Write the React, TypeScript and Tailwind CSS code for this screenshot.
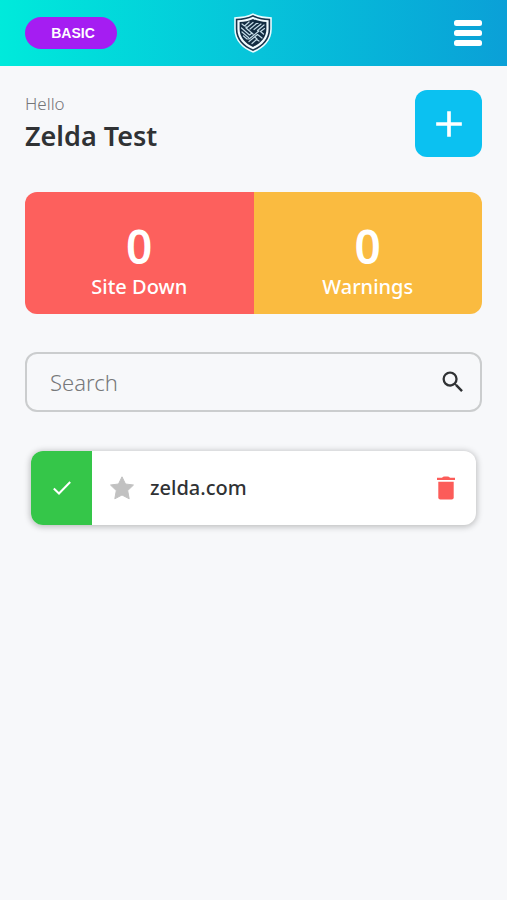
import { useState } from "react";
import { MdAdd, MdSearch } from "react-icons/md";

interface Site {
  id: number;
  name: string;
}

interface StatProps {
  value: number;
  label: string;
  className: string;
}

const initialSites: Site[] = [{ id: 1, name: "zelda.com" }];

function ShieldLogo() {
  return (
    <svg viewBox="0 0 38 40" className="h-10 w-[38px]" aria-hidden="true">
      <path
        d="M19 .3C24 3 31 4 37.800 4.200V16C37.800 28 29 35.700 19 39.800C9 35.700 .2 28 .2 16V4.200C7 4 14 3 19 .3Z"
        fill="#e9fbff"
      />
      <path
        d="M19 2C24 4.600 30 5.600 36.200 5.800V16C36.200 27 28.500 34 19 38C9.500 34 1.800 27 1.800 16V5.800C8 5.600 14 4.600 19 2Z"
        fill="#18334a"
      />
      <path
        d="M19 3.700C24 6 29 7 34.600 7.200V16C34.600 26 27.800 32.500 19 36.300C10.200 32.500 3.400 26 3.400 16V7.200C9 7 14 6 19 3.700Z"
        fill="#f1fbff"
      />
      <path
        d="M19 5.900C23 7.800 27.500 8.800 32.400 9V16C32.400 24.600 26.500 30.500 19 33.900C11.500 30.500 5.600 24.600 5.600 16V9C10.500 8.800 15 7.800 19 5.900Z"
        fill="#122c42"
      />
      {/* Maze lines */}
      <path
        d="M8 11L10.500 13L15 9M13 14.500L19 9.500M16 16L22.500 10.500H24M20 16.500L27 11M23.500 17.500L30 12M7.500 15L15.500 22L18 20M8 19L14.500 24.500M12 13.500V15L19 21M9.500 23L13 26H15L25 18M30.500 15.500L26.500 18.500L29.500 21M15 28.500L23.500 21.500L28 25M18 30.500L22.500 26.500L25 28M20.500 23.800L23 26"
        fill="none"
        stroke="#c4dce8"
        strokeWidth="1.200"
        strokeLinecap="round"
        strokeLinejoin="round"
      />
    </svg>
  );
}

function MenuIcon() {
  return (
    <svg viewBox="0 0 28 26" className="h-[26px] w-7" fill="#fff" aria-hidden="true">
      <rect width="28" height="6" rx="2.500" />
      <rect y="10" width="28" height="6" rx="2.500" />
      <rect y="20" width="28" height="6" rx="2.500" />
    </svg>
  );
}

function CheckIcon() {
  return (
    <svg viewBox="0 0 18 14" className="h-[14px] w-[18px]" fill="none" stroke="#fff" strokeWidth="2" aria-hidden="true">
      <path d="M.8 7.500L6 12.500L17.200 1" />
    </svg>
  );
}

function StarIcon() {
  return (
    <svg viewBox="0 0 24 24" className="size-6" fill="#c1c1c1" stroke="#c1c1c1" strokeLinejoin="round" aria-hidden="true">
      <path d="M12 .8L15.500 8L23.500 9L17.700 14.600L19.200 22.800L12 19L4.800 22.800L6.300 14.600L.5 9L8.500 8Z" />
    </svg>
  );
}

function TrashIcon() {
  return (
    <svg viewBox="0 0 20 24" className="h-6 w-5" fill="#fc5c59" aria-hidden="true">
      <path d="M1 1.800H6Q7 .5 8.500 .5H11.500Q13 .5 14 1.800H19V4H1Z" />
      <path d="M2.300 5.800H17.700V21.500Q17.700 23.500 15.700 23.500H4.300Q2.300 23.500 2.300 21.500Z" />
    </svg>
  );
}

function Stat({ value, label, className }: StatProps) {
  return (
    <div className={`flex flex-1 flex-col items-center pt-7 pb-3 text-white ${className}`}>
      <span className="text-[46px] leading-[52px] font-semibold">{value}</span>
      <span className="text-xl leading-[30px] font-medium">{label}</span>
    </div>
  );
}

export default function App() {
  const [sites, setSites] = useState<Site[]>(initialSites);
  const [query, setQuery] = useState("");

  const visibleSites = sites.filter((site) => site.name.includes(query.trim().toLowerCase()));

  const removeSite = (id: number) => {
    setSites(sites.filter((site) => site.id !== id));
  };

  return (
    <div className="min-h-screen bg-[#f7f8fa] font-['Noto_Sans',sans-serif] text-[#303234]">
      <header className="grid grid-cols-3 items-center bg-linear-to-r from-[#00eadb] via-[#07c4da] to-[#0ba0d7] px-[25px] py-[13px]">
        <div>
          <button
            type="button"
            className="h-8 w-[92px] rounded-full bg-[#a51df2] pl-1 font-['Liberation_Sans',sans-serif] text-sm font-bold text-white"
          >
            BASIC
          </button>
        </div>
        <div className="flex justify-center">
          <ShieldLogo />
        </div>
        <button type="button" aria-label="Menu" className="justify-self-end">
          <MenuIcon />
        </button>
      </header>

      <main className="px-[25px] pt-6">
        {/* Greeting */}
        <div className="flex items-center justify-between">
          <div>
            <p className="text-[17px] leading-6 font-light text-[#747678]">Hello</p>
            <h1 className="text-[27px] leading-10 font-semibold">Zelda Test</h1>
          </div>
          <button
            type="button"
            aria-label="Add site"
            className="flex size-[67px] items-center justify-center rounded-xl bg-[#0bc1f1] text-white"
          >
            <MdAdd className="size-11" />
          </button>
        </div>

        {/* Stats */}
        <div className="mt-[35px] flex overflow-hidden rounded-xl">
          <Stat value={0} label="Site Down" className="bg-[#fd605d]" />
          <Stat value={0} label="Warnings" className="bg-[#fabb40]" />
        </div>

        {/* Search */}
        <div className="mt-[38px] flex h-[60px] items-center rounded-xl border-2 border-[#cbcdce] pr-[13px] pl-[23px]">
          <input
            type="text"
            aria-label="Search"
            placeholder="Search"
            value={query}
            onChange={(e) => setQuery(e.target.value)}
            className="min-w-0 flex-1 bg-transparent text-[22px] leading-8 font-light outline-none placeholder:text-[#77797b]"
          />
          <MdSearch className="size-7" />
        </div>

        {/* Sites */}
        <ul className="mt-[39px] space-y-4 px-[6px]">
          {visibleSites.map((site) => (
            <li
              key={site.id}
              className="flex h-[74px] items-center overflow-hidden rounded-xl bg-white pr-5 shadow-[0_1px_6px_1px_rgba(0,0,0,0.24)]"
            >
              <div className="flex w-[61px] items-center justify-center self-stretch bg-[#35c649]">
                <CheckIcon />
              </div>
              <button type="button" aria-label="Favorite" className="ml-[18px]">
                <StarIcon />
              </button>
              <span className="ml-4 flex-1 text-xl font-medium">{site.name}</span>
              <button type="button" aria-label="Delete" onClick={() => removeSite(site.id)}>
                <TrashIcon />
              </button>
            </li>
          ))}
        </ul>
      </main>
    </div>
  );
}
